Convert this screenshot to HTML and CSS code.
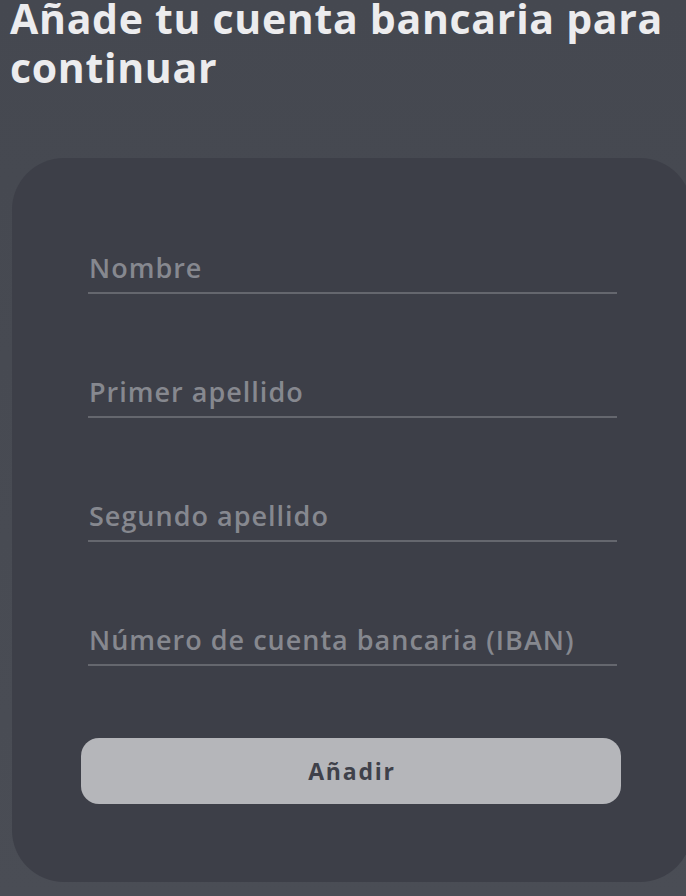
FILE: index.html
```html
<!DOCTYPE html>
<html lang="es">
<head>
<meta charset="utf-8">
<title>Añade tu cuenta bancaria</title>
<link rel="stylesheet" href="styles.css">
</head>
<body>
<main class="screen">
  <h1 class="title">Añade tu cuenta bancaria para continuar</h1>
  <form class="card">
    <div class="field"><input class="input" type="text" placeholder="Nombre"></div>
    <div class="field"><input class="input" type="text" placeholder="Primer apellido"></div>
    <div class="field"><input class="input" type="text" placeholder="Segundo apellido"></div>
    <div class="field"><input class="input" type="text" placeholder="Número de cuenta bancaria (IBAN)"></div>
    <button class="btn" type="button">Añadir</button>
  </form>
</main>
</body>
</html>
```
FILE: styles.css
```css
html, body {
  margin: 0;
  padding: 0;
  overflow: hidden;
  height: 100%;
}
body {
  background: linear-gradient(180deg, #454850 0%, #4a4d55 100%);
  font-family: "Open Sans", "Noto Sans", sans-serif;
}
.screen {
  display: flex;
  flex-direction: column;
  height: 896px;
}
.title {
  margin: -6px 0 0 0;
  padding: 0 0 0 10px;
  color: #ececee;
  font-size: 41px;
  font-weight: 700;
  line-height: 49px;
  letter-spacing: 0.7px;
  width: 686px;
  box-sizing: border-box;
}
.card {
  margin: 66px -6px 0 12px;
  background: #3d3f48;
  border-radius: 52px;
  padding: 94px 75px 78px 76px;
  display: flex;
  flex-direction: column;
  gap: 82px;
}
.field {
  display: flex;
}
.input {
  flex: 1;
  box-sizing: border-box;
  height: 42px;
  padding: 0 0 10px 1px;
  margin: 0;
  border: none;
  border-bottom: 2px solid #65676e;
  background: transparent;
  font-family: inherit;
  font-size: 27px;
  font-weight: 600;
  letter-spacing: 1px;
  color: #ececee;
  outline: none;
}
.input::placeholder {
  color: #86888f;
  opacity: 1;
}
.btn {
  margin: -10px 0 0 -7px;
  width: 540px;
  height: 66px;
  padding: 0 0 0 2px;
  border: none;
  border-radius: 18px;
  background: #b5b6ba;
  color: #3f414a;
  font-family: inherit;
  font-size: 23px;
  font-weight: 700;
  letter-spacing: 1.8px;
}
```
